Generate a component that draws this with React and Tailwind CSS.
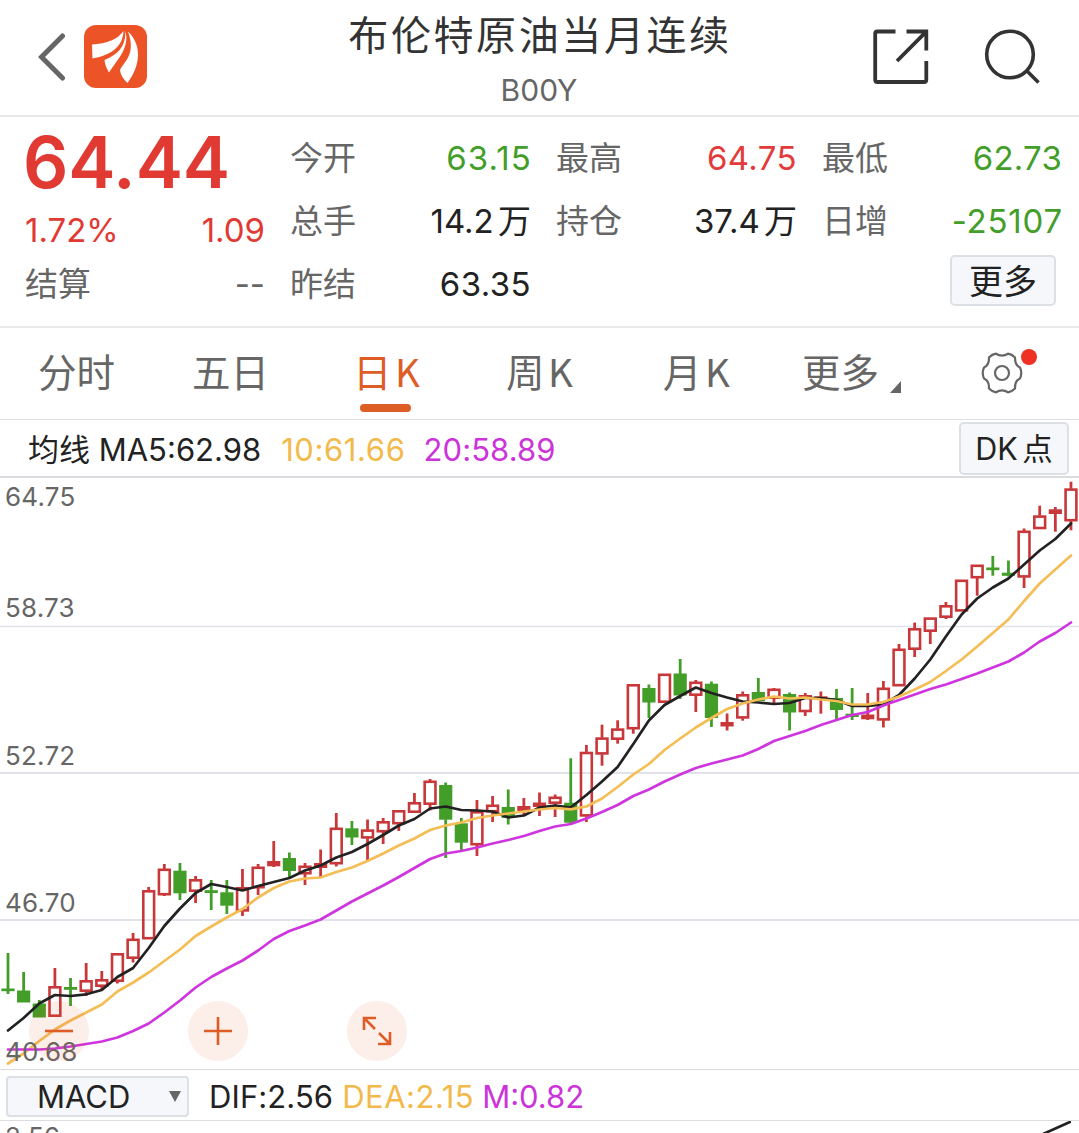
// App.jsx - Brent crude quote page with the daily K line chart

const RED = '#c8383a';
const GREEN = '#429e28';

const STEP = 15.632;
const candleX = (i) => 8 + i * STEP;

// [kind, high, top, bottom, low] on the vertical scale of the chart
// r = rising (hollow), f = rising with a thin body (solid), g = falling
const candles = [
  ['g', 953, 988.5, 991.2, 994], ['g', 972, 990.5, 1002.5, 1002.5], ['g', 1000, 1003.5, 1017.5, 1017.5],
  ['r', 968, 986, 1017, 1017], ['g', 978, 987, 989.8, 1006], ['r', 963, 980, 992, 996],
  ['r', 971, 979, 987, 990], ['r', 953, 953, 982, 983.5], ['r', 933, 938.5, 959, 962.5],
  ['r', 887, 890, 939.5, 939.5], ['r', 864, 868.5, 895.5, 896], ['g', 863, 870.7, 893.3, 900],
  ['r', 876, 879, 892, 903], ['g', 880, 890.2, 893, 910], ['g', 880, 892.3, 905.7, 914],
  ['r', 869, 887, 911.7, 916], ['r', 864, 866.5, 888.5, 895], ['f', 841, 861, 866.3, 867],
  ['g', 852.5, 858, 871, 878], ['r', 863, 865.5, 874.5, 885], ['f', 849.5, 863, 868, 877],
  ['r', 813, 827.5, 864.5, 866.5], ['g', 821, 828.3, 837.5, 845], ['r', 819.5, 829.3, 838.7, 860],
  ['r', 818, 821, 832.5, 844], ['r', 810, 810, 824.5, 831], ['r', 793, 802, 813, 813],
  ['r', 779, 780.5, 805, 810.5], ['g', 782.5, 785, 819.7, 858], ['g', 818, 823.3, 842.7, 851],
  ['r', 800, 811, 845.5, 856], ['r', 796, 804.5, 812.5, 822], ['g', 789.5, 807, 818, 824.5],
  ['f', 798, 806, 811, 816], ['f', 792.5, 802.5, 807, 816], ['r', 794.5, 796.5, 804, 817],
  ['g', 758.3, 802.7, 822.7, 824], ['r', 745, 751.7, 816.7, 822], ['r', 724.7, 737.3, 754.7, 765.7],
  ['r', 720.3, 728.3, 740, 743.7], ['r', 684, 684, 729.5, 733.7], ['g', 684.5, 688, 702.5, 718],
  ['r', 673.5, 673.5, 703, 703], ['g', 659, 673.5, 695.5, 699], ['r', 680, 681.5, 696, 712],
  ['g', 681.5, 683.7, 718, 727], ['f', 713.5, 722, 726.5, 730.5], ['r', 691.5, 694, 718.7, 720.7],
  ['g', 678, 692, 701, 701], ['r', 688, 688.5, 699, 705], ['g', 692.5, 694, 712.5, 730.5],
  ['r', 693, 695, 712.3, 716], ['f', 691.5, 696.3, 700, 713.7], ['g', 689, 698, 710, 719],
  ['g', 688, 713.7, 717, 720], ['f', 693, 714.5, 719.3, 720], ['r', 681, 687.5, 720.7, 727.5],
  ['r', 644, 648.5, 686.5, 686.5], ['r', 622.5, 628, 650, 657], ['r', 617.3, 617.3, 632, 644],
  ['r', 602, 605, 618, 619], ['r', 579.5, 579.5, 611.7, 611.7], ['r', 564.5, 564.5, 578.5, 595.7],
  ['g', 556, 567.5, 570.2, 575.7], ['g', 560.5, 572.7, 575.8, 576.5], ['r', 528.5, 530.5, 577.7, 588],
  ['r', 505.7, 515.3, 529.3, 529.3], ['f', 507, 509.3, 514, 531.7], ['r', 481.7, 488.3, 521.5, 530.3],
];

const ma5 = [
  1030.5, 1018, 1003.5, 995, 996, 994.3, 990, 977, 968, 948, 926, 908.5, 893, 884, 887, 890.5, 886,
  882, 878, 870.5, 865.5, 857.5, 852, 844, 835, 825.5, 819, 808.5, 806.5, 810, 810.5, 811.5, 817.5,
  815.5, 807.5, 805.5, 807.5, 795, 781.5, 767, 744, 720.5, 705, 696, 687.5, 693, 697.5, 701.5, 702.5,
  704, 703, 698, 698, 700, 706, 706, 704.5, 695, 678.5, 659.5, 636.5, 614.5, 598.5, 587.5, 578.5,
  564.5, 550.5, 539, 523.5,
];

const ma10 = [
  1063.5, 1053.5, 1041, 1029.5, 1020.5, 1012.5, 1004.5, 991.5, 982.5, 972.5, 961, 949.5, 936, 926.5,
  917.5, 909, 897.5, 888, 881.5, 878.5, 877.5, 872, 867.5, 861, 853.5, 845.5, 838.5, 830, 825.5,
  822.5, 818, 815.5, 813.5, 811.5, 809.5, 808, 809.3, 806.5, 798.5, 787, 774.5, 764, 750, 738.5,
  727.5, 718, 709, 703.5, 699.5, 696.5, 698.5, 697.5, 699.5, 701, 704.5, 704.5, 702, 696.5, 689.5,
  682, 671, 659.5, 646.5, 633, 619.5, 601, 583.5, 569.5, 555.5,
];

const ma20 = [
  1049.5, 1049.5, 1049.5, 1048.5, 1046.5, 1044, 1041.5, 1037.5, 1031, 1023.5, 1012.5, 1000.5, 987.5,
  977, 968.5, 960.5, 950.5, 939, 931, 925.5, 919.5, 910.5, 901.5, 893.5, 885.5, 877, 868, 859, 853.5,
  851, 847.5, 843.5, 840, 836, 831, 826.5, 824, 818.5, 812, 805, 796, 789.5, 781.5, 774.5, 768, 763.5,
  759.5, 755.5, 749, 741, 736, 731, 725, 720, 715, 712, 705.5, 700, 694.5, 689, 684.5, 679, 673.5,
  667.5, 661.5, 652.5, 641.5, 633, 622.5,
];

const toPoints = (values) => values.map((y, i) => `${candleX(i).toFixed(1)},${y}`).join(' ');

const axisLabels = [
  { text: '64.75', className: 'top-[1px]' },
  { text: '58.73', className: 'top-[112px]' },
  { text: '52.72', className: 'top-[260px]' },
  { text: '46.70', className: 'top-[407px]' },
  { text: '40.68', className: 'top-[556px]' },
];

function Candle({ data, index }) {
  const [kind, high, top, bottom, low] = data;
  const x = candleX(index);
  const color = kind === 'g' ? GREEN : RED;

  return (
    <g stroke={color} strokeWidth="2.8">
      {high < top && <line x1={x} x2={x} y1={high} y2={top + 0.5} />}
      {low > bottom && <line x1={x} x2={x} y1={bottom - 0.5} y2={low} />}
      {kind === 'r' ? (
        <rect x={x - 5.4} y={top + 1.3} width="10.8" height={bottom - top - 2.6} fill="none" strokeWidth="2.6" />
      ) : (
        <rect x={x - 6.6} y={top} width="13.2" height={bottom - top} fill={color} stroke="none" />
      )}
    </g>
  );
}

function Header() {
  return (
    <header className="flex h-[117px] items-start justify-between border-b-2 border-[#e9e9e9] pr-[39px] pl-[38px]">
      <div className="flex w-[300px] items-center pt-[25px]">
        <svg className="h-[48px] w-[30px]" viewBox="0 0 30 48" fill="none">
          <path d="M24.500 3 L3.500 24 L24.500 45" stroke="#666" strokeWidth="5" strokeLinecap="round" />
        </svg>
        <svg className="ml-[16px] h-[63px] w-[63px]" viewBox="0 0 63 63">
          <rect width="63" height="63" rx="12" fill="#ec5428" />
          <g fill="#fff">
            <path d="M39.500 6 C39 21 28 30 8.500 33.500 L8 19.500 C23 19 34 14 39.500 6 Z" />
            <path d="M41.300 6 C46 22 34 34 25 47.500 Q21 41 20.500 35 C33 30 42 22 41.300 6 Z" />
            <path d="M44 6.500 C58 20 57 40 43.500 58 Q37 52 36 45.500 C38 38 53 31 44 6.500 Z" />
          </g>
        </svg>
      </div>

      <div className="flex flex-col items-center">
        <h1 className="mt-[9px] pl-[2px] text-[40px] leading-[54px] tracking-[2.600px] text-[#333] whitespace-nowrap">
          布伦特原油当月连续
        </h1>
        <p className="mt-[8px] text-[30px] leading-[38px] text-[#666]">B00Y</p>
      </div>

      <div className="flex w-[300px] items-start justify-end gap-[55px] pt-[29px]">
        <svg className="h-[56px] w-[56px]" viewBox="0 0 56 56" fill="none" stroke="#333" strokeWidth="3.800">
          <path d="M22.500 2.500 H4.500 Q2.200 2.500 2.200 4.800 V50.700 Q2.200 53 4.500 53 H51 Q53.300 53 53.300 50.700 V32" />
          <path d="M33.500 2.500 H53.300 V21.500 M53 2.800 L24 32" />
        </svg>
        <svg className="h-[56px] w-[56px]" viewBox="0 0 56 56" fill="none" stroke="#333" strokeWidth="3.600">
          <circle cx="26" cy="25.500" r="23.300" />
          <path d="M42.500 41.500 L54.500 53.500" />
        </svg>
      </div>
    </header>
  );
}

function Stat({ label, value, className }) {
  return (
    <div className="flex h-[63px] items-center justify-between">
      <span className="text-[33px] text-[#666]">{label}</span>
      <span className={`text-[33px] [word-spacing:-5px] ${className}`}>{value}</span>
    </div>
  );
}

function Quote() {
  return (
    <section className="grid h-[211px] grid-cols-[240px_241px_241px_240px] gap-x-[25px] border-b-2 border-[#e9e9e9] pt-[10px] pl-[25px] leading-none">
      <div>
        <div className="-ml-[2px] flex h-[72px] items-center pb-[2px] text-[71px] font-semibold tracking-[-0.1px] text-[#e03a32]">
          64.44
        </div>
        <div className="flex h-[63px] items-center justify-between text-[33px] text-[#e03a32]">
          <span>1.72%</span>
          <span>1.09</span>
        </div>
        <div className="flex h-[44px] items-center justify-between text-[#666]">
          <span className="text-[33px]">结算</span>
          <span className="text-[33px]">--</span>
        </div>
      </div>
      <div>
        <Stat label="今开" value="63.15" className="-mr-[1px] tracking-[1.1px] text-[#429e28]" />
        <Stat label="总手" value="14.2 万" className="text-[#222]" />
        <Stat label="昨结" value="63.35" className="tracking-[0.4px] text-[#222]" />
      </div>
      <div>
        <Stat label="最高" value="64.75" className="tracking-[0.4px] text-[#e23b3b]" />
        <Stat label="持仓" value="37.4 万" className="text-[#222]" />
      </div>
      <div>
        <Stat label="最低" value="62.73" className="tracking-[0.2px] text-[#429e28]" />
        <Stat label="日增" value="-25107" className="-mr-[1px] tracking-[0.800px] text-[#429e28]" />
        <div className="flex justify-end pt-[2px] pr-[6px]">
          <button className="h-[51px] w-[106px] rounded-[5px] border-2 border-[#dcdfe4] bg-[#f6f7fa] pt-[3px] text-[34px] leading-none text-[#222]">
            更多
          </button>
        </div>
      </div>
    </section>
  );
}

function Tabs() {
  return (
    <nav className="flex h-[92px] items-start border-b border-[#dedee0] pt-[17px] pl-[38px] font-['Noto_Sans_CJK_SC',sans-serif] text-[38.500px] leading-[50px] [word-spacing:-5px] whitespace-nowrap text-[#666]">
      <div className="w-[154px]">分时</div>
      <div className="w-[161px]">五日</div>
      <div className="flex w-[153px] flex-col text-[#de5d26]">
        <span>日 K</span>
        <span className="mt-[9px] ml-[7px] h-[8px] w-[51px] rounded-full bg-[#de5d26]" />
      </div>
      <div className="w-[157px]">周 K</div>
      <div className="w-[139px]">月 K</div>
      <div className="flex w-[179px] items-end">
        更多
        <svg className="mb-[2px] ml-[11px] h-[12px] w-[11px]" viewBox="0 0 11 12">
          <path d="M11 0 V12 H0 Z" fill="#666" />
        </svg>
      </div>
      <div className="relative mt-[7px] h-[42px] w-[42px]">
        <svg className="h-[42px] w-[42px]" viewBox="0 0 42 42" fill="none" stroke="#666" strokeWidth="2.200" strokeLinejoin="round">
          <path d="M15 1.700 Q21 5.500 27 1.700 Q31 2.300 34 5.500 Q33.700 13.300 39 15.500 Q41.500 21 39 26.500 Q33.700 28.700 34 36.500 Q31 39.700 27 40.300 Q21 36.500 15 40.300 Q11 39.700 8 36.500 Q8.300 28.700 3 26.500 Q.5 21 3 15.500 Q8.300 13.300 8 5.500 Q11 2.300 15 1.700 Z" />
          <circle cx="21" cy="21" r="7" />
        </svg>
        <span className="absolute -top-[3px] left-[40px] h-[16px] w-[16px] rounded-full bg-[#ee3124]" />
      </div>
    </nav>
  );
}

function MaBar() {
  return (
    <div className="flex h-[58px] items-center border-b-2 border-[#d9dbdf] pr-[10px] pl-[28px] text-[31px] leading-none whitespace-nowrap">
      <span className="mt-[3px] text-[#222]">均线 MA5:62.98</span>
      <span className="mt-[3px] ml-[20px] tracking-[0.600px] text-[#f2b94b]">10:61.66</span>
      <span className="mt-[3px] ml-[18px] tracking-[0.100px] text-[#cb34d9]">20:58.89</span>
      <button className="ml-auto h-[53px] w-[110px] rounded-[5px] border-2 border-[#dcdfe4] bg-[#f6f7fa] pt-[2px] text-[30.500px] [word-spacing:-4px] text-[#222]">
        DK 点
      </button>
    </div>
  );
}

function RoundButton({ children }) {
  return (
    <button className="flex h-[60px] w-[60px] items-center justify-center rounded-full bg-[#de5d26]/10">
      <svg className="h-[30px] w-[30px]" viewBox="0 0 30 30" fill="none" stroke="#de5d26" strokeWidth="2.600">
        {children}
      </svg>
    </button>
  );
}

function KLineChart() {
  return (
    <section className="relative h-[592px] border-b border-[#d9d9de]">
      <svg className="block h-[591px] w-full" viewBox="0 478 1079 591">
        <g stroke="#e1e2ea" strokeWidth="2">
          <line x1="0" x2="1079" y1="626.500" y2="626.500" strokeWidth="1.500" />
          <line x1="0" x2="1079" y1="773" y2="773" />
          <line x1="0" x2="1079" y1="920" y2="920" />
        </g>
        {candles.map((c, i) => (
          <Candle key={i} data={c} index={i} />
        ))}
        <g fill="none" strokeWidth="2.700" strokeLinejoin="round" strokeLinecap="round">
          <polyline points={toPoints(ma5)} stroke="#222" />
          <polyline points={toPoints(ma10)} stroke="#f4bd55" />
          <polyline points={toPoints(ma20)} stroke="#cf35de" />
        </g>
      </svg>

      {axisLabels.map((label) => (
        <span
          key={label.text}
          className={`absolute left-[5px] text-[26px] leading-[36px] tracking-[0.2px] text-[#666] ${label.className}`}
        >
          {label.text}
        </span>
      ))}

      {/* Zoom out / zoom in / fullscreen */}
      <div className="absolute top-[523px] left-[29px] flex gap-[99px]">
        <RoundButton>
          <path d="M1 15 H29" />
        </RoundButton>
        <RoundButton>
          <path d="M1 15 H29 M15 1 V29" />
        </RoundButton>
        <RoundButton>
          <path d="M2 14 V2 H14 M2 2 L13 13 M17 17 L28 28 M28 16 V28 H16" />
        </RoundButton>
      </div>
    </section>
  );
}

function Macd() {
  return (
    <section className="h-[63px] overflow-hidden">
      <div className="flex h-[51px] items-center border-b border-[#dcdde1] pl-[6px] text-[31px] leading-none whitespace-nowrap">
        <button className="mt-[2px] flex h-[41px] w-[183px] items-center justify-between rounded-[4px] border-2 border-[#dcdfe4] bg-[#f6f7fa] pr-[6px] pl-[29px] text-[#222]">
          MACD
          <svg className="h-[11px] w-[12px]" viewBox="0 0 12 11">
            <path d="M0 0 H12 L6 11 Z" fill="#666" />
          </svg>
        </button>
        <span className="mt-[3px] ml-[20px] tracking-[0.100px] text-[#222]">DIF:2.56</span>
        <span className="mt-[3px] ml-[9px] tracking-[0.500px] text-[#f2b94b]">DEA:2.15</span>
        <span className="mt-[3px] ml-[8px] text-[#cb34d9]">M:0.82</span>
      </div>
      <div className="flex h-[12px] items-start justify-between overflow-hidden pr-[8px] pl-[5px]">
        <span className="text-[26px] leading-[32px] text-[#666]">2.56</span>
        <svg className="h-[12px] w-[32px]" viewBox="0 0 32 12" fill="none">
          <path d="M3 13.500 L32 0.500" stroke="#222" strokeWidth="2.700" />
        </svg>
      </div>
    </section>
  );
}

export default function App() {
  return (
    <div className="h-[1133px] w-[1079px] overflow-hidden bg-white font-[Inter,'Noto_Sans_CJK_SC',sans-serif]">
      <Header />
      <Quote />
      <Tabs />
      <MaBar />
      <KLineChart />
      <Macd />
    </div>
  );
}
